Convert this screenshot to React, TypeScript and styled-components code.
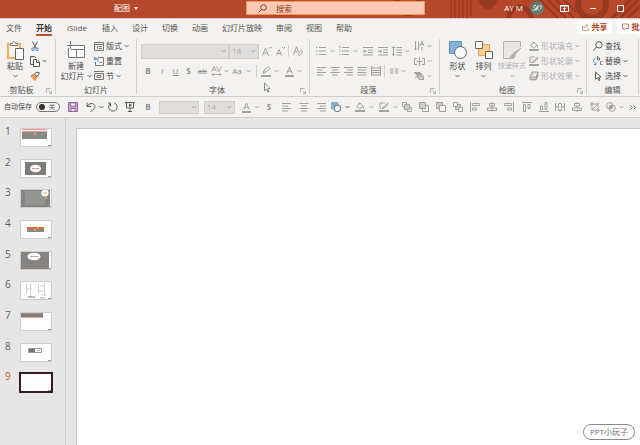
import React from "react";
import styled, { createGlobalStyle } from "styled-components";

const Global = createGlobalStyle`
  * { box-sizing: border-box; }
  body { margin: 0; font-family: "Open Sans", "Noto Sans CJK SC", sans-serif; color: #4c4a48; }
  button, select, input { font: inherit; color: inherit; margin: 0; padding: 0; border: 0; background: none; }
  ul, ol { list-style: none; margin: 0; padding: 0; }
  svg { display: block; flex: none; }
`;

const Shell = styled.div`
  min-height: 100vh;
  display: flex;
  flex-direction: column;
  background: #e6e6e6;
  overflow: hidden;
  font-size: 8px;
  line-height: 10px;
`;

/* Title bar */
const TitleBar = styled.header`
  position: relative;
  flex: none;
  display: flex;
  height: 18px;
  background: #b7472a;
  color: #fff;
`;
const Pattern = styled.svg`
  position: absolute;
  right: 0;
  top: 0;
`;
const DocName = styled.button`
  flex: 0 1 246px;
  display: flex;
  align-items: center;
  gap: 4px;
  padding: 0 0 2px 114px;
  white-space: nowrap;
`;
const Search = styled.label`
  position: relative;
  flex: 0 1 179px;
  height: 14px;
  margin-top: 1px;
  display: flex;
  align-items: center;
  gap: 9px;
  padding-left: 11px;
  background: #fcc9b4;
  border: 1px solid #f09a5c;
  input {
    min-width: 0;
    flex: 1;
    height: 12px;
    outline: 0;
  }
  input::placeholder { color: #8a3a20; opacity: 1; }
`;
const Account = styled.div`
  position: relative;
  flex: 1;
  display: flex;
  justify-content: flex-end;
  align-items: center;
  padding: 0 16px 2px 0;
`;
const UserName = styled.span`
  margin-right: 7px;
  white-space: nowrap;
`;
const WindowButton = styled.button<{ $gap: number }>`
  display: flex;
  margin-left: ${(p) => p.$gap}px;
`;

/* Tabs */
const TabBar = styled.div`
  flex: none;
  display: flex;
  height: 19px;
  background: #f3f2f1;
  border-top: 1px solid #dccbc6;
`;
const Tabs = styled.nav`
  display: flex;
  align-items: flex-start;
  gap: 14px;
  padding: 3px 0 0 6px;
`;
const Tab = styled.button<{ $active?: boolean }>`
  min-width: 16px;
  height: 14px;
  line-height: 12px;
  white-space: nowrap;
  font-weight: ${(p) => (p.$active ? 700 : 400)};
  color: ${(p) => (p.$active ? "#333" : "#55524f")};
  border-bottom: 2px solid ${(p) => (p.$active ? "#c0502c" : "transparent")};
  &:nth-child(3) { min-width: 22px; }
`;
const Actions = styled.div`
  flex: 0 0 63px;
  display: flex;
  gap: 5px;
  margin-left: auto;
  padding-top: 1px;
  overflow: hidden;
`;
const Action = styled.button`
  flex: 0 0 35px;
  height: 14px;
  display: flex;
  align-items: center;
  justify-content: center;
  gap: 3px;
  background: #fff;
  border-radius: 1px;
  color: #b3431f;
  font-weight: 700;
  white-space: nowrap;
`;

/* Ribbon */
const Ribbon = styled.div`
  flex: none;
  display: flex;
  padding: 2px 0;
  background: #f3f2f1;
  border-bottom: 1px solid #cfcdcb;
  overflow: hidden;
`;
const Group = styled.section<{ $w: number }>`
  flex: 0 0 ${(p) => p.$w}px;
  border-right: 1px solid #d2d0ce;
`;
const GroupBody = styled.div<{ $pad?: number }>`
  display: flex;
  height: 44px;
  padding-left: ${(p) => p.$pad || 0}px;
`;
const GroupFoot = styled.div`
  display: flex;
  padding-top: 3px;
  line-height: 8px;
  font-size: 8px;
  color: #55524f;
  span { flex: 1; text-align: center; }
  button { width: 12px; padding: 1px 0 0 3px; }
`;
const BigButton = styled.button<{ $w: number; $off?: boolean }>`
  flex: 0 0 ${(p) => p.$w}px;
  display: flex;
  flex-direction: column;
  align-items: center;
  padding-top: 2px;
  font-size: ${(p) => (p.$off ? 7 : 8)}px;
  line-height: 10px;
  white-space: nowrap;
  color: ${(p) => (p.$off ? "#b3b1af" : "#4c4a48")};
`;
const BigIcon = styled.span`
  height: 20px;
`;
const Caption = styled.span`
  display: flex;
  align-items: center;
  gap: 2px;
  height: 10px;
`;
const Stack = styled.div<{ $ml?: number }>`
  display: flex;
  flex-direction: column;
  margin-left: ${(p) => p.$ml || 0}px;
  padding-right: 2px;
`;
const SmallButton = styled.button<{ $off?: boolean }>`
  flex: 1;
  display: flex;
  align-items: center;
  gap: 2px;
  font-size: 8px;
  white-space: nowrap;
  color: ${(p) => (p.$off ? "#b3b1af" : "#4c4a48")};
`;
const Rows = styled.div`
  display: flex;
  flex-direction: column;
  padding-top: 2px;
`;
const Row = styled.div`
  display: flex;
  align-items: center;
  height: 20px;
`;
const Cell = styled.button<{ $w: number; $on?: boolean }>`
  flex: 0 0 ${(p) => p.$w}px;
  min-width: 0;
  display: flex;
  justify-content: center;
  align-items: center;
  height: 14px;
  font-size: 8px;
  color: ${(p) => (p.$on ? "#4c4a48" : "#8f8d8b")};
`;
const Rule = styled.span<{ $w: number }>`
  flex: 0 0 ${(p) => p.$w}px;
  display: flex;
  justify-content: center;
  &::before { content: ""; width: 1px; height: 12px; background: #d2d0ce; }
`;
const Combo = styled.label<{ $w: number; $h: number; $ml?: number }>`
  flex: 0 0 ${(p) => p.$w}px;
  height: ${(p) => p.$h}px;
  margin-left: ${(p) => p.$ml || 0}px;
  display: flex;
  align-items: center;
  padding: 0 2px;
  background: #dfdedc;
  border: 1px solid #d2d0ce;
  color: #aaa8a6;
  select { flex: 1; min-width: 0; appearance: none; opacity: 1; line-height: 10px; }
`;

/* Quick access toolbar */
const QuickBar = styled.div`
  flex: none;
  display: flex;
  align-items: center;
  height: 21px;
  background: #f3f2f1;
  border-bottom: 1px solid #cfcdcb;
  overflow: hidden;
`;
const AutoSave = styled.label`
  flex: 0 0 61px;
  display: flex;
  align-items: center;
  gap: 4px;
  padding-left: 4px;
  font-size: 7px;
  white-space: nowrap;
`;
const Toggle = styled.span`
  position: relative;
  display: flex;
  align-items: center;
  justify-content: flex-end;
  width: 24px;
  height: 10px;
  padding-right: 4px;
  border: 1px solid #777;
  border-radius: 5px;
  font-size: 6px;
  line-height: 8px;
  input { position: absolute; inset: 0; opacity: 0; }
  &::before {
    content: "";
    width: 6px;
    height: 6px;
    margin-right: auto;
    margin-left: 2px;
    border-radius: 3px;
    background: #333;
  }
`;
const Spacer = styled.span`
  flex: 0 0 5px;
`;

/* Work area */
const Work = styled.main`
  position: relative;
  flex: 1;
  display: flex;
`;
const SlideList = styled.ol`
  flex: 0 0 65px;
  display: grid;
  grid-template-rows: repeat(9, 1fr);
  height: 286px;
  padding-top: 10px;
`;
const SlideItem = styled.li<{ $sel?: boolean }>`
  display: flex;
  align-items: flex-start;
  color: ${(p) => (p.$sel ? "#c8622f" : "#5f5d5b")};
`;
const SlideNo = styled.span`
  flex: 0 0 20px;
  padding-left: 5px;
  font-size: 10px;
  line-height: 7px;
`;
const Thumb = styled.button<{ $sel?: boolean }>`
  display: flex;
  background: #fff;
  outline: ${(p) => (p.$sel ? "2px solid #3a1c20" : "1px solid #cfcdcb")};
  outline-offset: -1px;
`;
const Editor = styled.div`
  flex: 1;
  display: flex;
  padding: 10px 0 0 10px;
  border-left: 1px solid #cfcdcb;
`;
const Canvas = styled.div`
  flex: 1;
  background: #fff;
  border: solid #cccac8;
  border-width: 1px 0 0 1px;
`;
const Mark = styled.span`
  position: absolute;
  right: 5px;
  bottom: 5px;
  padding: 1px 6px;
  border: 1px solid #8a8a8a;
  border-radius: 8px;
  line-height: 12px;
  color: #6e6e6e;
`;
const Pointer = styled.svg`
  position: absolute;
  left: 263px;
  top: 82px;
`;

const G = "#a3a19f";
const D = "#5c5a58";

type IconProps = { w: number; h: number; c?: string; children: React.ReactNode };
const Icon = ({ w, h, c = G, children }: IconProps) => (
  <svg width={w} height={h} viewBox={`0 0 ${w} ${h}`} fill="none" stroke={c} aria-hidden="true">
    {children}
  </svg>
);
const Chevron = ({ c = G }: { c?: string }) => (
  <Icon w={5} h={4} c={c}><path d="M.5 1 2.5 3 4.5 1" strokeWidth=".9" /></Icon>
);
const Lines = ({ d, c = G }: { d: string; c?: string }) => (
  <Icon w={10} h={10} c={c}><path d={d} /></Icon>
);

const alignLeft = "M0 1.5h9M0 4h6M0 6.5h9M0 9h6";
const alignCenter = "M.5 1.5h9M2 4h6M.5 6.5h9M2 9h6";
const alignRight = "M1 1.5h9M4 4h6M1 6.5h9M4 9h6";
const justify = "M.5 1.5h9M.5 4h9M.5 6.5h9M.5 9h9";

const ShapesIcon = ({ s }: { s: number }) => (
  <svg width={s} height={s} viewBox="0 0 18 18" aria-hidden="true">
    <path d="M.5.5h12v12H.5z" fill="#83b4dc" stroke="#5c93c4" />
    <circle cx="11.5" cy="11.5" r="6" fill="#fafafa" stroke="#666" strokeWidth={s < 12 ? 1.8 : 1} />
  </svg>
);
const FillIcon = () => (
  <Icon w={10} h={10}>
    <path d="M1.5 4.5 5 1l3 3.2-3.2 3zM4 .5v2.5M8.5 4.5v2" />
    <path d="M0 8h10v2H0z" fill={G} stroke="none" />
  </Icon>
);
const OutlineIcon = () => (
  <Icon w={10} h={10}>
    <path d="M6 1H1v5.5h1.5M3 6.5 9 1M3 6.5l2-.3L9.6 1.8" />
    <path d="M0 8h10v2H0z" fill={G} stroke="none" />
  </Icon>
);
const EffectIcon = () => (
  <Icon w={10} h={10}>
    <path d="M3 1h6L7 6H1zM1 6v2.5h6L9 4V1" fill="#d8d6d4" />
    <path d="M1 8.5h6L9 4" strokeWidth="1.4" />
  </Icon>
);
const FontColor = () => (
  <Icon w={9} h={11}>
    <path d="M1.8 7.5 4.5 1l2.7 6.5M2.7 5.3h3.6" />
    <path d="M0 9h9v2H0z" fill={G} stroke="none" />
  </Icon>
);
const Launcher = ({ name }: { name: string }) => (
  <button aria-label={name}>
    <Icon w={6} h={6}><path d="M.5 4.5v-4h4M2.5 2.5l3 3M5.5 3v2.5H3" strokeWidth=".8" /></Icon>
  </button>
);

const layerBase = "#cfcdcb";
const arrangeTools: { name: string; w: number; icon: React.ReactNode }[] = [
  { name: "置于顶层", w: 19, icon: <><path d="M.5.5h4v4h-4zM5.5 5.5h4v4h-4z" /><path d="M2.5 2.5h5v5h-5z" fill={layerBase} /></> },
  { name: "上移一层", w: 16, icon: <><path d="M3.5 3.5h6v6h-6z" /><path d="M.5.5h6v6h-6z" fill={layerBase} /></> },
  { name: "下移一层", w: 17, icon: <><path d="M.5.5h6v6h-6z" fill={layerBase} /><path d="M3.5 3.5h6v6h-6z" fill="#f3f2f1" /></> },
  { name: "置于底层", w: 17, icon: <><path d="M2.5 2.5h5v5h-5z" fill={layerBase} /><path d="M.5.5h4v4h-4zM5.5 5.5h4v4h-4z" fill="#f3f2f1" /></> },
  { name: "左对齐", w: 17, icon: <path d="M.5 0v10M2.5 1.5h7v2h-7zM2.5 6h4v2h-4z" /> },
  { name: "水平居中", w: 17, icon: <path d="M5 0v10M2.5 1.5h5v2.5h-5zM.5 6h9v2.5h-9z" /> },
  { name: "右对齐", w: 18, icon: <path d="M9.5 0v10M.5 1.5h7v2h-7zM3.5 6h4v2h-4z" /> },
  { name: "顶端对齐", w: 17, icon: <path d="M0 .5h10M1.5 2.5h2v7h-2zM6 2.5h2v4H6z" /> },
  { name: "底端对齐", w: 17, icon: <path d="M0 9.5h10M1.5 4h2v4h-2zM6 .5h2v7H6z" /> },
  { name: "横向分布", w: 16, icon: <path d="M.5 1v8M9.5 1v8M3.5 1.5h3v7h-3zM0 5h3.5M6.5 5H10" /> },
  { name: "纵向分布", w: 18, icon: <path d="M5 0v2M5 4v2M5 8v2M2.5 1.5h5V4h-5zM.5 6h9v2.5h-9z" /> },
  { name: "裁剪", w: 18, icon: <path d="M2 0v8h8M0 2h8v8M2 8l7.500-7.500" /> },
  { name: "合并形状", w: 13, icon: <><circle cx="3.8" cy="3.8" r="3.2" /><circle cx="6.2" cy="6.2" r="3.2" /><circle cx="5" cy="5" r="1.5" fill={G} /></> },
];

const R = "#8a8988";
const thumbs: React.ReactNode[] = [
  <><path d="M2 1h25v3H2z" fill="#e9a19a" /><path d="M2 2h25v1H2z" fill="#f8e8e6" /><path d="M2 4h25v7H2z" fill={R} /><path d="M14 5h2v2h-2z" fill="#e8a040" /></>,
  <><path d="M5 3h21v13H5z" fill="#7d7c7b" /><ellipse cx="15.5" cy="9.5" rx="5.5" ry="3.8" fill="#fff" /><path d="M12 9.5h7" stroke="#d99a94" /></>,
  <><path d="M1 0h29v18H1z" fill="#858483" /><path d="M5 2h20v14H5z" fill="#929592" /><circle cx="25" cy="4" r="3.6" fill="#fff" /><path d="M23 4h4" stroke="#d99a94" /><path d="M25 8h2v2h-2z" fill="#e8a040" /></>,
  <><path d="M7 7h17v5H7z" fill={R} /><path d="M7 7h17v2H7z" fill="#d9702f" /><path d="M17 8h2M14 10h2" stroke="#f4cf9b" /></>,
  <><path d="M1 1h28v17H1z" fill="#848382" /><ellipse cx="14" cy="5.5" rx="6.5" ry="3.8" fill="#fff" /><path d="M10 5.5h8" stroke="#c8a19e" /></>,
  <><path d="M6.5 3v10M10.5 2v14M18.5 3v9M24.5 2v13M20 5h4M7 8h5M18 10h6M21 14h5" stroke="#d2d0ce" fill="none" /><path d="M8 16h7" stroke="#777" /><path d="M20 17h5" stroke="#e3a087" /></>,
  <><path d="M1 1h22v5H1z" fill="#777" /><path d="M1 1h22v1H1z" fill="#a58a7c" /><path d="M1 5h22v1H1z" fill="#e8aaa0" /><path d="M1 3h22" stroke="#8d8178" /></>,
  <><path d="M8.5 5.5h13v4h-13z" fill="#fff" stroke="#999" /><path d="M9 6h6v3H9z" fill="#777" /><path d="M17 7.5h3" stroke="#bbb" /></>,
  null,
];

const tabs = ["文件", "开始", "iSlide", "插入", "设计", "切换", "动画", "幻灯片放映", "审阅", "视图", "帮助"];

export default function App() {
  return (
    <Shell>
      <Global />
      <TitleBar>
        <Pattern width="260" height="18" viewBox="0 0 260 18" fill="none" stroke="#973820" aria-hidden="true">
          <circle cx="28" cy="2" r="11" strokeWidth="6" />
          <path d="M71 0v18M75 0v18M79 0v18M83 0v18M87 0v18M91 0v16" strokeWidth="1.5" />
          <circle cx="108" cy="0" r="9" fill="#973820" stroke="none" />
          <circle cx="140" cy="18" r="11" strokeWidth="5" />
          <path d="m160 0 18 18M168 0l18 18M176 0l18 18M184 0l12 12" strokeWidth="2" />
          <circle cx="212" cy="4" r="14" strokeWidth="6" />
          <path d="m232 18 18-18M240 18l18-18M248 18l12-12" strokeWidth="3" />
        </Pattern>
        <DocName>配图<svg width="4" height="3" viewBox="0 0 4 3"><path d="M0 0h4L2 3z" fill="#fff" /></svg></DocName>
        <Search>
          <Icon w={9} h={9} c="#8a3a20"><circle cx="5.5" cy="3.5" r="2.8" /><path d="M3.5 5.5.5 8.5" /></Icon>
          <input type="search" aria-label="搜索" placeholder="搜索" />
        </Search>
        <Account>
          <UserName>AY M</UserName>
          <svg width="14" height="14" viewBox="0 0 14 14" aria-hidden="true">
            <circle cx="7" cy="7" r="7" fill="#667a6c" />
            <path d="M6 4.5C3 4 3 6.5 5 7s0 3-2.5 2M7.5 4.5 6 9.5M10.5 4 7 7l2 2.5M11.5 4.5 10.5 8" fill="none" stroke="#e8ece8" />
          </svg>
          <WindowButton $gap={16} aria-label="功能区显示选项">
            <Icon w={9} h={8} c="#fff"><path d="M.5 1.5h8v6h-8zM.5 2h8M4.5 7V4M3 5.2l1.5-1.4L6 5.2" /></Icon>
          </WindowButton>
          <WindowButton $gap={21} aria-label="最小化">
            <Icon w={6} h={8} c="#fff"><path d="M0 4.5h6" /></Icon>
          </WindowButton>
          <WindowButton $gap={21} aria-label="最大化">
            <Icon w={7} h={7} c="#fff"><path d="M.5.5h6v6h-6z" /></Icon>
          </WindowButton>
        </Account>
      </TitleBar>

      <TabBar>
        <Tabs>
          {tabs.map((t) => <Tab key={t} $active={t === "开始"}>{t}</Tab>)}
        </Tabs>
        <Actions>
          <Action>
            <Icon w={7} h={8} c="#cf8674"><path d="M2 3.5H.5v4h6v-2M2.5 5c0-2 1-2.5 3-2.5M4 .7l2 1.8-2 1.8" strokeWidth=".8" /></Icon>
            共享
          </Action>
          <Action>
            <Icon w={7} h={8} c="#c4634b"><path d="M.5 1h6v4.5H3.5L2 7V5.5H.5z" strokeWidth=".8" /></Icon>
            批注
          </Action>
        </Actions>
      </TabBar>

      <Ribbon>
        <Group $w={56}>
          <GroupBody $pad={1}>
            <BigButton $w={28}>
              <BigIcon>
                <svg width="17" height="19" viewBox="0 0 17 19" fill="none">
                  <path d="M3.5 3H1v14h7M11 3h2v4" stroke="#efb05d" strokeWidth="2" />
                  <path d="M3.5 4.5v-2h2c0-2.5 3-2.5 3 0h2v2z" fill="#fff" stroke="#777" />
                  <path d="M8.5 7.5h8v11h-8z" fill="#fff" stroke="#666" />
                </svg>
              </BigIcon>
              <Caption>粘贴</Caption>
              <Caption><Chevron c={D} /></Caption>
            </BigButton>
            <Stack $ml={1}>
              <SmallButton aria-label="剪切">
                <Icon w={10} h={10} c={D}><path d="M2.5.5 6 7M7.5.5 4 7" /><g stroke="#4a8cc4"><circle cx="3" cy="8.2" r="1.3" /><circle cx="7" cy="8.2" r="1.3" /></g></Icon>
              </SmallButton>
              <SmallButton aria-label="复制">
                <Icon w={10} h={11} c={D}><path d="M3 8.5H.5v-8h4l1.5 1.5" /><path d="M3.5 3.5H7l2.5 2.5v4.5h-6zM6.5 3.5v3h3" fill="#fff" /></Icon>
                <Chevron c={D} />
              </SmallButton>
              <SmallButton aria-label="格式刷">
                <Icon w={10} h={10} c={D}><path d="M.8 5 4 3l3 3-2 3.5z" fill="#efa04c" stroke="#d98434" /><path d="M4.5 3 7 1l1 .8h1.5l-2.500 4z" fill="#fff" /></Icon>
              </SmallButton>
            </Stack>
          </GroupBody>
          <GroupFoot><span>剪贴板</span><Launcher name="剪贴板选项" /></GroupFoot>
        </Group>

        <Group $w={81}>
          <GroupBody $pad={3}>
            <BigButton $w={34}>
              <BigIcon>
                <Icon w={18} h={17} c="#777"><path d="M5 4.5h12.5v12H1.5V7" fill="#fff" /><path d="M3.5 0v8M0 4.5h7M4 8.5h13M9.5 8.5v8" /></Icon>
              </BigIcon>
              <Caption>新建</Caption>
              <Caption>幻灯片<Chevron c={D} /></Caption>
            </BigButton>
            <Stack $ml={1}>
              <SmallButton>
                <Icon w={10} h={9} c="#777"><path d="M.5.5h9v8h-9zM.5 2.5h9M3.5 4v3M5 4.5h3M5 6.5h3" /></Icon>版式<Chevron c={D} />
              </SmallButton>
              <SmallButton>
                <Icon w={10} h={9} c="#777"><path d="M4 .5h5.5v8h-8V5M5.5 5.5h2.5" /><path d="M.5 1.5c2-1.5 4 0 3.5 3M.5 0v2.5H3" stroke="#4a8cc4" /></Icon>重置
              </SmallButton>
              <SmallButton>
                <Icon w={10} h={9} c="#777"><path d="M0 .5h10M.5 2.5h9v6h-9z" /><path d="M3 4.5h4v2H3z" /></Icon>节<Chevron c={D} />
              </SmallButton>
            </Stack>
          </GroupBody>
          <GroupFoot><span>幻灯片</span></GroupFoot>
        </Group>

        <Group $w={173}>
          <GroupBody $pad={4}>
            <Rows>
              <Row>
                <Combo $w={88} $h={15}><select disabled aria-label="字体" /><Chevron /></Combo>
                <Combo $w={30} $h={15}><select disabled aria-label="字号"><option>18</option></select><Chevron /></Combo>
                <Cell $w={16} aria-label="增大字号"><Icon w={10} h={10}><path d="M.5 9.5 3.5 2l3 7.5M1.5 7h4M7 2.5 8.5 1 10 2.5" /></Icon></Cell>
                <Cell $w={11} aria-label="减小字号"><Icon w={9} h={10}><path d="M.5 9.5 3 3.5l2.5 6M1.5 7.5h3M6 1l1.5 1.5L9 1" /></Icon></Cell>
                <Rule $w={5} />
                <Cell $w={14} aria-label="清除格式"><Icon w={10} h={10}><path d="M.5 8.5 3.5.8l2 5M1.5 5.8h3M5 7.5l3-3 1.8 1.8-3 3H6z" /></Icon></Cell>
              </Row>
              <Row>
                <Cell $w={14}><b>B</b></Cell>
                <Cell $w={14}><i>I</i></Cell>
                <Cell $w={13}><u>U</u></Cell>
                <Cell $w={13}><b>S</b></Cell>
                <Cell $w={15}><s>ab</s></Cell>
                <Cell $w={13} aria-label="字符间距"><Icon w={11} h={10}><path d="M.5 5.5 3 .5l2.5 5M1.5 4h3M5.5.5 8 5.5l2.5-5M1 8.5h9M2.5 7 1 8.5 2.5 10M8.5 7 10 8.5 8.5 10" strokeWidth=".9" /></Icon></Cell>
                <Cell $w={6} aria-label="间距选项"><Chevron /></Cell>
                <Cell $w={16}>Aa</Cell>
                <Cell $w={6} aria-label="大小写选项"><Chevron /></Cell>
                <Rule $w={10} />
                <Cell $w={10} aria-label="突出显示"><Icon w={10} h={11}><path d="M2 7.5 3 4.5 7.5.8l1.5 1.7L4.5 6.5zM3 4.5l1.5 2" /><path d="M0 9h10v2H0z" fill={G} stroke="none" /></Icon></Cell>
                <Cell $w={10} aria-label="突出显示选项"><Chevron /></Cell>
                <Cell $w={16} aria-label="字体颜色"><FontColor /></Cell>
                <Cell $w={5} aria-label="颜色选项"><Chevron /></Cell>
              </Row>
            </Rows>
          </GroupBody>
          <GroupFoot><span>字体</span><Launcher name="字体选项" /></GroupFoot>
        </Group>

        <Group $w={130}>
          <GroupBody $pad={5}>
            <Rows>
              <Row>
                <Cell $w={12} aria-label="项目符号"><Lines d="M0 1.5h1.5M0 5h1.5M0 8.5h1.5M3 1.5h7M3 5h7M3 8.5h7" /></Cell>
                <Cell $w={10} aria-label="项目符号选项"><Chevron /></Cell>
                <Cell $w={13} aria-label="编号"><Lines d="M1 0v2.5M0 5h1.5M0 8.5h1.5M3 1.5h7M3 5h7M3 8.5h7" /></Cell>
                <Cell $w={10} aria-label="编号选项"><Chevron /></Cell>
                <Cell $w={16} aria-label="减少缩进"><Lines d="M0 1.5h10M5 4h5M5 6.5h5M0 9h10M0 5.2h4M2 3.5.5 5.2 2 7" /></Cell>
                <Cell $w={14} aria-label="增加缩进"><Lines d="M0 1.5h10M5 4h5M5 6.5h5M0 9h10M0 5.2h4M2 3.5l1.5 1.7L2 7" /></Cell>
                <Cell $w={14} aria-label="行距"><Lines d="M1.5.5v9M0 2 1.5.5 3 2M0 8l1.5 1.5L3 8M4.5 1.5H10M4.5 4H10M4.5 6.5H10M4.5 9H10" /></Cell>
                <Cell $w={7} aria-label="行距选项"><Chevron /></Cell>
              </Row>
              <Row>
                <Cell $w={13} aria-label="左对齐"><Lines d={alignLeft} /></Cell>
                <Cell $w={13} aria-label="居中"><Lines d={alignCenter} /></Cell>
                <Cell $w={14} aria-label="右对齐"><Lines d={alignRight} /></Cell>
                <Cell $w={14} aria-label="两端对齐"><Lines d={justify} /></Cell>
                <Cell $w={14} aria-label="分散对齐"><Lines d="M.5 0v10M9.5 0v10M.5 2h9M.5 4.5h9M.5 6.5h9M.5 9h9" /></Cell>
                <Rule $w={3} />
                <Cell $w={15} aria-label="分栏"><Lines d="M1 3h3.5M6 3h3.5M1 5h3.5M6 5h3.5M1 7h3.5M6 7h3.5" /></Cell>
                <Cell $w={5} aria-label="分栏选项"><Chevron /></Cell>
              </Row>
            </Rows>
            <Stack $ml={3}>
              <SmallButton aria-label="文字方向"><Icon w={11} h={10}><path d="M1.5 0v9M0 7.5 1.5 9 3 7.5M4.5 0v9M6 5 8 .5 10 5M6.8 3.5h2.5M8 6v3.5" /></Icon><Chevron /></SmallButton>
              <SmallButton aria-label="对齐文本"><Icon w={11} h={9}><path d="M3 1.5H.5v6H3M8 1.5h2.5v6H8M5.5 0v9M2.5 4.5h6" /></Icon><Chevron /></SmallButton>
              <SmallButton aria-label="转换为 SmartArt"><Icon w={11} h={9}><path d="M0 1.5h6l2 2.5H3z" fill={G} /><path d="M3 5h6.5v3.5H5zM3 5 1.5 7" fill="#cfcdcb" /></Icon><Chevron /></SmallButton>
            </Stack>
          </GroupBody>
          <GroupFoot><span>段落</span><Launcher name="段落选项" /></GroupFoot>
        </Group>

        <Group $w={147}>
          <GroupBody $pad={5}>
            <BigButton $w={25}>
              <BigIcon><ShapesIcon s={18} /></BigIcon>
              <Caption>形状</Caption><Caption><Chevron c={D} /></Caption>
            </BigButton>
            <BigButton $w={27}>
              <BigIcon>
                <svg width="18" height="18" viewBox="0 0 18 18"><path d="M3.5 3.5h11v11h-11z" fill="#f9d08d" stroke="#e9a554" /><path d="M.5.5h7v7h-7zM10.5 10.5h7v7h-7z" fill="#fff" stroke="#666" /></svg>
              </BigIcon>
              <Caption>排列</Caption><Caption><Chevron c={D} /></Caption>
            </BigButton>
            <BigButton $w={30} $off>
              <BigIcon>
                <Icon w={19} h={19} c="#b3b1af"><path d="M17.5 6V.5H.5v17h6" fill="#e9e8e7" /><path d="M18 7 11.5 14l-1.500-1.500zM10.500 13c-2 0-2 3-4.500 4.500 3 .8 6 0 6-3z" fill="#b3b1af" /></Icon>
              </BigIcon>
              <Caption>快速样式</Caption><Caption><Chevron /></Caption>
            </BigButton>
            <Stack $ml={2}>
              <SmallButton $off><FillIcon />形状填充<Chevron /></SmallButton>
              <SmallButton $off><OutlineIcon />形状轮廓<Chevron /></SmallButton>
              <SmallButton $off><EffectIcon />形状效果<Chevron /></SmallButton>
            </Stack>
          </GroupBody>
          <GroupFoot><span>绘图</span><Launcher name="绘图选项" /></GroupFoot>
        </Group>

        <Group $w={52}>
          <GroupBody>
            <Stack $ml={6}>
              <SmallButton><Icon w={10} h={10} c={D}><circle cx="6" cy="3.8" r="3.2" /><path d="M3.5 6 .5 9.5" /></Icon>查找</SmallButton>
              <SmallButton><Icon w={10} h={10} c="#4a8cc4"><path d="M2.5 2C0 3 0 6.5 2.5 7.5M1 8.5h2V6.5" /><path d="M4.5 0v4h2V2h-2" stroke="#777" /><path d="M9.5 5.5H7.5v3h2" stroke="#a06bb4" /></Icon>替换<Chevron c={D} /></SmallButton>
              <SmallButton><Icon w={10} h={10} c={D}><path d="M2.5.8v7.5l2-1.8 1.3 3 1.2-.6-1.2-2.7H8z" fill="#fff" /></Icon>选择<Chevron c={D} /></SmallButton>
            </Stack>
          </GroupBody>
          <GroupFoot><span>编辑</span></GroupFoot>
        </Group>
      </Ribbon>

      <QuickBar>
        <AutoSave>自动保存<Toggle><input type="checkbox" aria-label="自动保存" />关</Toggle></AutoSave>
        <Cell $w={24} $on aria-label="保存"><Icon w={10} h={10} c="#8f6a97"><path d="M.5.5h9v9h-9z" fill="#cda3d6" /><path d="M2.5 1h5v3h-5zM3 6.5h4v3H3z" fill="#fff" /></Icon></Cell>
        <Cell $w={12} $on aria-label="撤消"><Icon w={10} h={10} c={D}><path d="M1 .5v4h4M1.2 4.2C4-.2 9 1.5 9 4.5c0 2-2 3.5-4.5 5" /></Icon></Cell>
        <Cell $w={9} $on aria-label="撤消选项"><Chevron c={D} /></Cell>
        <Cell $w={14} $on aria-label="恢复"><Icon w={10} h={10} c={D}><path d="M6.5 1a4.2 4.2 0 1 1-4 .5M2.5 4.5v-3.5H0" /></Icon></Cell>
        <Cell $w={20} $on aria-label="从头开始"><Icon w={10} h={10} c={D}><path d="M0 .5h10M1.5.5v5.5h7V.5M5 6v3.5M3 9.5h4M4.5 2v2.5L6.5 3.3z" /></Icon></Cell>
        <Cell $w={16}><b>B</b></Cell>
        <Combo $w={40} $h={13} $ml={3}><select disabled aria-label="字体" /><Chevron /></Combo>
        <Combo $w={31} $h={13} $ml={5}><select disabled aria-label="字号"><option>14</option></select><Chevron /></Combo>
        <Spacer />
        <Cell $w={12} aria-label="字体颜色"><FontColor /></Cell>
        <Cell $w={8} aria-label="颜色选项"><Chevron /></Cell>
        <Cell $w={18}><b>S</b></Cell>
        <Cell $w={18} aria-label="左对齐"><Lines d={alignLeft} /></Cell>
        <Cell $w={16} aria-label="居中"><Lines d={alignCenter} /></Cell>
        <Cell $w={17} aria-label="右对齐"><Lines d={alignRight} /></Cell>
        <Cell $w={14} aria-label="形状"><ShapesIcon s={10} /></Cell>
        <Cell $w={8} aria-label="形状选项"><Chevron c={D} /></Cell>
        <Cell $w={18} aria-label="形状填充"><FillIcon /></Cell>
        <Cell $w={4} aria-label="填充选项"><Chevron /></Cell>
        <Cell $w={21} aria-label="形状轮廓"><OutlineIcon /></Cell>
        <Cell $w={3} aria-label="轮廓选项"><Chevron /></Cell>
        {arrangeTools.map((t) => (
          <Cell key={t.name} $w={t.w} aria-label={t.name}><Icon w={10} h={10}>{t.icon}</Icon></Cell>
        ))}
        <Cell $w={8} aria-label="合并选项"><Chevron /></Cell>
        <Cell $w={15} $on aria-label="更多命令"><Icon w={6} h={5} c={D}><path d="M.5.5l2 2-2 2M3.5.5l2 2-2 2" strokeWidth=".9" /></Icon></Cell>
      </QuickBar>

      <Work>
        <SlideList>
          {thumbs.map((art, i) => (
            <SlideItem key={i} $sel={i === 8}>
              <SlideNo>{i + 1}</SlideNo>
              <Thumb $sel={i === 8} aria-label={`幻灯片 ${i + 1}`}>
                <svg width="32" height="19" viewBox="0 0 32 19">{art}<path d="M28 17.5h3" stroke="#999" /></svg>
              </Thumb>
            </SlideItem>
          ))}
        </SlideList>
        <Editor><Canvas /></Editor>
        <Mark>PPT小玩子</Mark>
      </Work>
      <Pointer width="8" height="11" viewBox="0 0 8 11" aria-hidden="true">
        <path d="M1.5.8v8l2-1.7 1.3 3 1.2-.5-1.3-3H7z" fill="#fff" stroke="#777" strokeWidth=".9" />
      </Pointer>
    </Shell>
  );
}
